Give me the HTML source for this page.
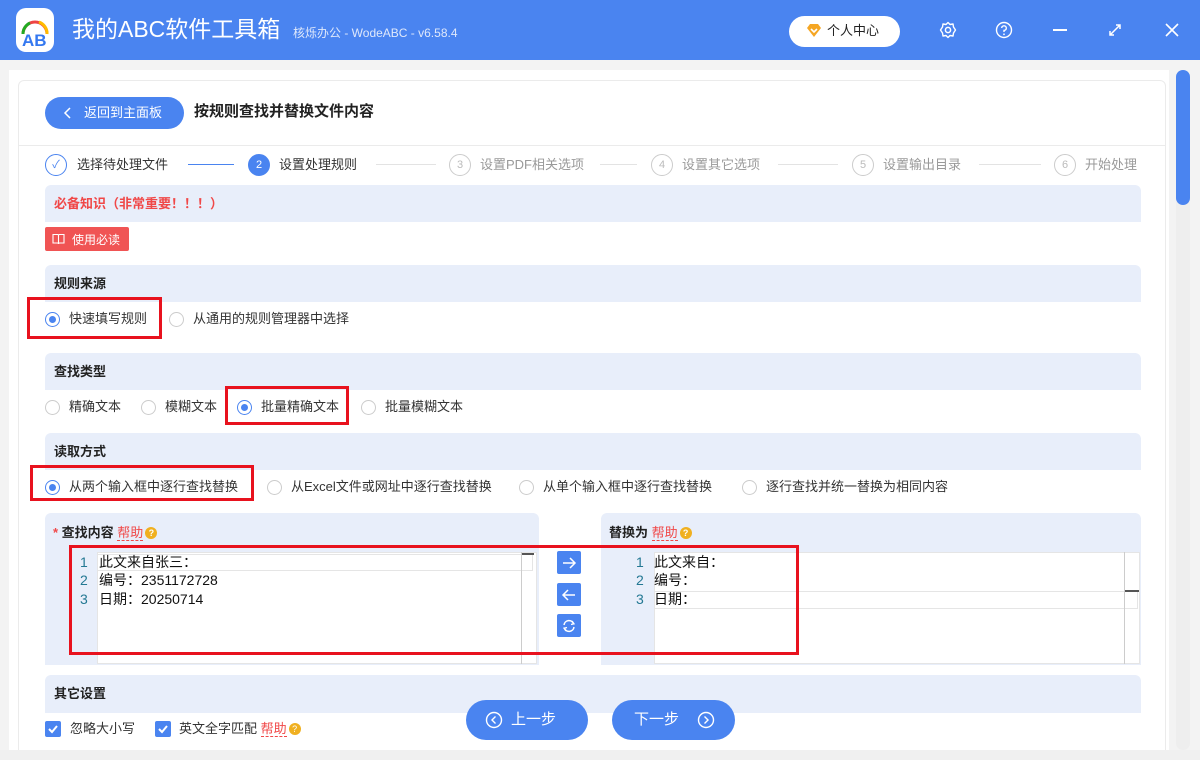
<!DOCTYPE html>
<html><head><meta charset="utf-8"><style>
*{margin:0;padding:0;box-sizing:border-box}
body{width:1200px;height:760px;overflow:hidden;background:#f3f3f3;font-family:"Liberation Sans","Noto Sans CJK SC",sans-serif;font-size:13px;color:#333;position:relative}
.a{position:absolute}
.band{position:absolute;left:45px;width:1096px;background:#e8eefa;border-radius:6px 6px 0 0;font-weight:bold;font-size:13px;color:#222;padding-left:9px}
.r{position:absolute;width:15px;height:15px;border:1px solid #ccc;border-radius:50%;background:#fff}
.r.on{border-color:#4a84f0}
.r.on::after{content:"";position:absolute;left:3px;top:3px;width:7px;height:7px;border-radius:50%;background:#4a84f0}
.t{position:absolute;font-size:13px;color:#333;white-space:nowrap;line-height:1.2}
.rb{position:absolute;border:3px solid #e8121e}
.step{position:absolute;top:154px;width:22px;height:22px;border-radius:50%;border:1px solid #ccc;color:#bbb;font-size:11px;text-align:center;line-height:20px}
.sl{position:absolute;top:164px;height:1px;background:#e3e3e3}
.sbtn{position:absolute;left:557px;width:24px;height:23px;background:#4a84f0;border-radius:2px}
.help{color:#f04848;border-bottom:1px dashed #f04848;font-weight:normal}
.q{display:inline-block;width:12px;height:12px;border-radius:50%;background:#f0b020;color:#fff;font-size:9px;text-align:center;line-height:12px;vertical-align:1px;margin-left:2px}
.ln{position:absolute;font-size:14px;color:#237893;line-height:1.2}
.code{position:absolute;font-size:14px;color:#111;white-space:nowrap;line-height:1.2}
.cb{position:absolute;top:721px;width:16px;height:16px;background:#4a84f0;border-radius:2px}
</style></head><body>
<div class="a" style="left:0;top:0;width:1200px;height:60px;background:#4a84f0"></div>
<div class="a" style="left:16px;top:8px;width:38px;height:44px;background:#fff;border-radius:10px"></div>
<svg class="a" style="left:16px;top:8px" width="38" height="44" viewBox="0 0 38 44"><path d="M7 26 A12 12 0 0 1 31 26" fill="none" stroke="#e44" stroke-width="3"/><path d="M7 26 A12 12 0 0 1 14 15" fill="none" stroke="#2a2" stroke-width="3"/><path d="M23 14 A12 12 0 0 1 31 26" fill="none" stroke="#fb0" stroke-width="3"/><text x="6" y="38" font-size="17" font-weight="bold" fill="#3478f0" font-family="Liberation Sans">AB</text></svg>
<div class="t" style="left:72px;top:16px;font-size:23px;color:#fff">我的ABC软件工具箱</div>
<div class="t" style="left:293px;top:26px;font-size:12px;color:#dfe8fb">核烁办公 - WodeABC - v6.58.4</div>
<div class="a" style="left:789px;top:16px;width:111px;height:31px;background:#fff;border-radius:16px"></div>
<svg class="a" style="left:806px;top:23px" width="16" height="15" viewBox="0 0 16 15"><path d="M1 5 L4 1 H12 L15 5 L8 14 Z" fill="#f5a623"/><path d="M5 6 L8 9 L11 6" stroke="#fff" stroke-width="1.6" fill="none"/></svg>
<div class="t" style="left:827px;top:23px;color:#222">个人中心</div>
<svg class="a" style="left:939px;top:21px" width="18" height="18" viewBox="0 0 18 18"><circle cx="9" cy="9" r="2.6" fill="none" stroke="#fff" stroke-width="1.5"/><path d="M9 1.5 L11 3.5 L14 3 L14.5 6 L16.5 9 L14.5 12 L14 15 L11 14.5 L9 16.5 L7 14.5 L4 15 L3.5 12 L1.5 9 L3.5 6 L4 3 L7 3.5 Z" fill="none" stroke="#fff" stroke-width="1.4" stroke-linejoin="round"/></svg>
<svg class="a" style="left:995px;top:21px" width="18" height="18" viewBox="0 0 18 18"><circle cx="9" cy="9" r="7.5" fill="none" stroke="#fff" stroke-width="1.4"/><path d="M6.7 7 A2.3 2.3 0 1 1 9 9.4 V11" fill="none" stroke="#fff" stroke-width="1.4"/><circle cx="9" cy="13.3" r="0.9" fill="#fff"/></svg>
<div class="a" style="left:1053px;top:29px;width:14px;height:1.5px;background:#fff"></div>
<svg class="a" style="left:1108px;top:23px" width="14" height="14" viewBox="0 0 14 14"><path d="M2 12 L12 2 M8 2 H12 V6 M2 8 V12 H6" stroke="#fff" stroke-width="1.5" fill="none"/></svg>
<svg class="a" style="left:1164px;top:22px" width="16" height="16" viewBox="0 0 16 16"><path d="M2 2 L14 14 M14 2 L2 14" stroke="#fff" stroke-width="1.6"/></svg>
<div class="a" style="left:9px;top:70px;width:1160px;height:680px;background:#fff"></div>
<div class="a" style="left:18px;top:80px;width:1148px;height:680px;border:1px solid #ebebeb;border-radius:6px;background:#fff"></div>
<div class="a" style="left:18px;top:145px;width:1148px;height:1px;background:#ebebeb"></div>
<div class="a" style="left:1176px;top:70px;width:14px;height:680px;background:#eee;border-radius:7px"></div>
<div class="a" style="left:1176px;top:70px;width:14px;height:135px;background:#4a84f0;border-radius:7px"></div>
<div class="a" style="left:45px;top:97px;width:139px;height:32px;background:#4a84f0;border-radius:16px"></div>
<svg class="a" style="left:63px;top:106px" width="10" height="14" viewBox="0 0 10 14"><path d="M7 2 L2 7 L7 12" stroke="#fff" stroke-width="1.5" fill="none"/></svg>
<div class="t" style="left:84px;top:105px;color:#fff">返回到主面板</div>
<div class="t" style="left:194px;top:103px;font-size:15px;font-weight:bold;color:#222">按规则查找并替换文件内容</div>
<div class="step" style="left:45px;border-color:#4a84f0;color:#4a84f0">✓</div>
<div class="t" style="left:77px;top:157px;color:#333">选择待处理文件</div>
<div class="sl" style="left:188px;width:46px;background:#4a84f0"></div>
<div class="step" style="left:248px;background:#4a84f0;border-color:#4a84f0;color:#fff">2</div>
<div class="t" style="left:279px;top:157px;color:#333">设置处理规则</div>
<div class="sl" style="left:376px;width:60px"></div>
<div class="step" style="left:449px">3</div>
<div class="t" style="left:480px;top:157px;color:#999">设置PDF相关选项</div>
<div class="sl" style="left:600px;width:37px"></div>
<div class="step" style="left:651px">4</div>
<div class="t" style="left:682px;top:157px;color:#999">设置其它选项</div>
<div class="sl" style="left:778px;width:60px"></div>
<div class="step" style="left:852px">5</div>
<div class="t" style="left:883px;top:157px;color:#999">设置输出目录</div>
<div class="sl" style="left:979px;width:62px"></div>
<div class="step" style="left:1054px">6</div>
<div class="t" style="left:1085px;top:157px;color:#999">开始处理</div>
<div class="band" style="top:185px;height:37px;line-height:37px;color:#f04848">必备知识（非常重要！！！）</div>
<div class="a" style="left:45px;top:227px;width:84px;height:24px;background:#f05454;border-radius:2px"></div>
<svg class="a" style="left:52px;top:233px" width="13" height="12" viewBox="0 0 13 12"><path d="M1 1.5 H5.5 Q6.5 1.5 6.5 2.5 V11 Q6.5 10 5.5 10 H1 Z M12 1.5 H7.5 Q6.5 1.5 6.5 2.5 V11 Q6.5 10 7.5 10 H12 Z" fill="none" stroke="#fff" stroke-width="1.1"/></svg>
<div class="t" style="left:72px;top:233px;color:#fff;font-size:12px">使用必读</div>
<div class="band" style="top:265px;height:37px;line-height:37px">规则来源</div>
<div class="r on" style="left:45px;top:312px"></div><div class="t" style="left:69px;top:311px">快速填写规则</div>
<div class="r" style="left:169px;top:312px"></div><div class="t" style="left:193px;top:311px">从通用的规则管理器中选择</div>
<div class="rb" style="left:27px;top:297px;width:135px;height:42px"></div>
<div class="band" style="top:353px;height:37px;line-height:37px">查找类型</div>
<div class="r" style="left:45px;top:400px"></div><div class="t" style="left:69px;top:399px">精确文本</div>
<div class="r" style="left:141px;top:400px"></div><div class="t" style="left:165px;top:399px">模糊文本</div>
<div class="r on" style="left:237px;top:400px"></div><div class="t" style="left:261px;top:399px">批量精确文本</div>
<div class="r" style="left:361px;top:400px"></div><div class="t" style="left:385px;top:399px">批量模糊文本</div>
<div class="rb" style="left:225px;top:386px;width:124px;height:39px"></div>
<div class="band" style="top:433px;height:37px;line-height:37px">读取方式</div>
<div class="r on" style="left:45px;top:480px"></div><div class="t" style="left:69px;top:479px">从两个输入框中逐行查找替换</div>
<div class="r" style="left:267px;top:480px"></div><div class="t" style="left:291px;top:479px">从Excel文件或网址中逐行查找替换</div>
<div class="r" style="left:519px;top:480px"></div><div class="t" style="left:543px;top:479px">从单个输入框中逐行查找替换</div>
<div class="r" style="left:742px;top:480px"></div><div class="t" style="left:766px;top:479px">逐行查找并统一替换为相同内容</div>
<div class="rb" style="left:30px;top:465px;width:224px;height:36px"></div>
<div class="a" style="left:45px;top:513px;width:494px;height:152px;background:#e8eefa;border-radius:6px 6px 0 0"></div>
<div class="t" style="left:53px;top:525px;font-weight:bold;color:#222"><span style="color:#f04848">*</span> 查找内容 <span class="help">帮助</span><span class="q">?</span></div>
<div class="a" style="left:97px;top:552px;width:440px;height:112px;background:#fff;border:1px solid #e5e5e5"></div>
<div class="a" style="left:97px;top:554px;width:436px;height:17px;border:1px solid #e5e5e5"></div>
<div class="a" style="left:521px;top:552px;width:1px;height:112px;background:#ccc"></div>
<div class="a" style="left:522px;top:553px;width:12px;height:2px;background:#555"></div>
<div class="ln" style="left:80px;top:554px">1</div><div class="ln" style="left:80px;top:572px">2</div><div class="ln" style="left:80px;top:591px">3</div>
<div class="code" style="left:99px;top:554px">此文来自张三：</div>
<div class="code" style="left:99px;top:572px">编号：2351172728</div>
<div class="code" style="left:99px;top:591px">日期：20250714</div>
<div class="sbtn" style="top:551px"></div><div class="sbtn" style="top:583px"></div><div class="sbtn" style="top:614px"></div>
<svg class="a" style="left:561px;top:555px" width="16" height="16" viewBox="0 0 16 16"><path d="M2 8 H14 M9 3 L14 8 L9 13" stroke="#fff" stroke-width="1.5" fill="none"/></svg>
<svg class="a" style="left:561px;top:587px" width="16" height="16" viewBox="0 0 16 16"><path d="M14 8 H2 M7 3 L2 8 L7 13" stroke="#fff" stroke-width="1.5" fill="none"/></svg>
<svg class="a" style="left:561px;top:618px" width="16" height="16" viewBox="0 0 16 16"><path d="M3 7 A5 5 0 0 1 12.5 5.5 M13 9 A5 5 0 0 1 3.5 10.5" stroke="#fff" stroke-width="1.5" fill="none"/><path d="M11 3 L13 5.8 L10 6.5 M5 13 L3 10.2 L6 9.5" stroke="#fff" stroke-width="1.3" fill="none"/></svg>
<div class="a" style="left:601px;top:513px;width:540px;height:152px;background:#e8eefa;border-radius:6px 6px 0 0"></div>
<div class="t" style="left:609px;top:525px;font-weight:bold;color:#222">替换为 <span class="help">帮助</span><span class="q">?</span></div>
<div class="a" style="left:654px;top:552px;width:486px;height:112px;background:#fff;border:1px solid #e5e5e5"></div>
<div class="a" style="left:654px;top:591px;width:484px;height:18px;border:1px solid #e5e5e5"></div>
<div class="a" style="left:1124px;top:552px;width:1px;height:112px;background:#ccc"></div>
<div class="a" style="left:1125px;top:590px;width:14px;height:2px;background:#555"></div>
<div class="ln" style="left:636px;top:554px">1</div><div class="ln" style="left:636px;top:572px">2</div><div class="ln" style="left:636px;top:591px">3</div>
<div class="code" style="left:654px;top:554px">此文来自：</div>
<div class="code" style="left:654px;top:572px">编号：</div>
<div class="code" style="left:654px;top:591px">日期：</div>
<div class="rb" style="left:69px;top:545px;width:730px;height:110px"></div>
<div class="band" style="top:675px;height:38px;line-height:38px">其它设置</div>
<div class="cb" style="left:45px"></div><svg class="a" style="left:45px;top:721px" width="16" height="16"><path d="M4 8 L7 11 L12 5" stroke="#fff" stroke-width="2" fill="none"/></svg>
<div class="t" style="left:70px;top:721px">忽略大小写</div>
<div class="cb" style="left:155px"></div><svg class="a" style="left:155px;top:721px" width="16" height="16"><path d="M4 8 L7 11 L12 5" stroke="#fff" stroke-width="2" fill="none"/></svg>
<div class="t" style="left:179px;top:721px">英文全字匹配 <span class="help">帮助</span><span class="q">?</span></div>
<div class="a" style="left:466px;top:700px;width:122px;height:40px;background:#4a84f0;border-radius:20px"></div>
<svg class="a" style="left:485px;top:711px" width="18" height="18" viewBox="0 0 18 18"><circle cx="9" cy="9" r="7.5" fill="none" stroke="#fff" stroke-width="1.4"/><path d="M10.5 5.5 L7 9 L10.5 12.5" fill="none" stroke="#fff" stroke-width="1.4"/></svg>
<div class="t" style="left:511px;top:711px;color:#fff;font-size:15px">上一步</div>
<div class="a" style="left:612px;top:700px;width:123px;height:40px;background:#4a84f0;border-radius:20px"></div>
<div class="t" style="left:634px;top:711px;color:#fff;font-size:15px">下一步</div>
<svg class="a" style="left:697px;top:711px" width="18" height="18" viewBox="0 0 18 18"><circle cx="9" cy="9" r="7.5" fill="none" stroke="#fff" stroke-width="1.4"/><path d="M7.5 5.5 L11 9 L7.5 12.5" fill="none" stroke="#fff" stroke-width="1.4"/></svg>
<div class="a" style="left:0;top:750px;width:1200px;height:10px;background:#f0f0f0"></div>
</body></html>
